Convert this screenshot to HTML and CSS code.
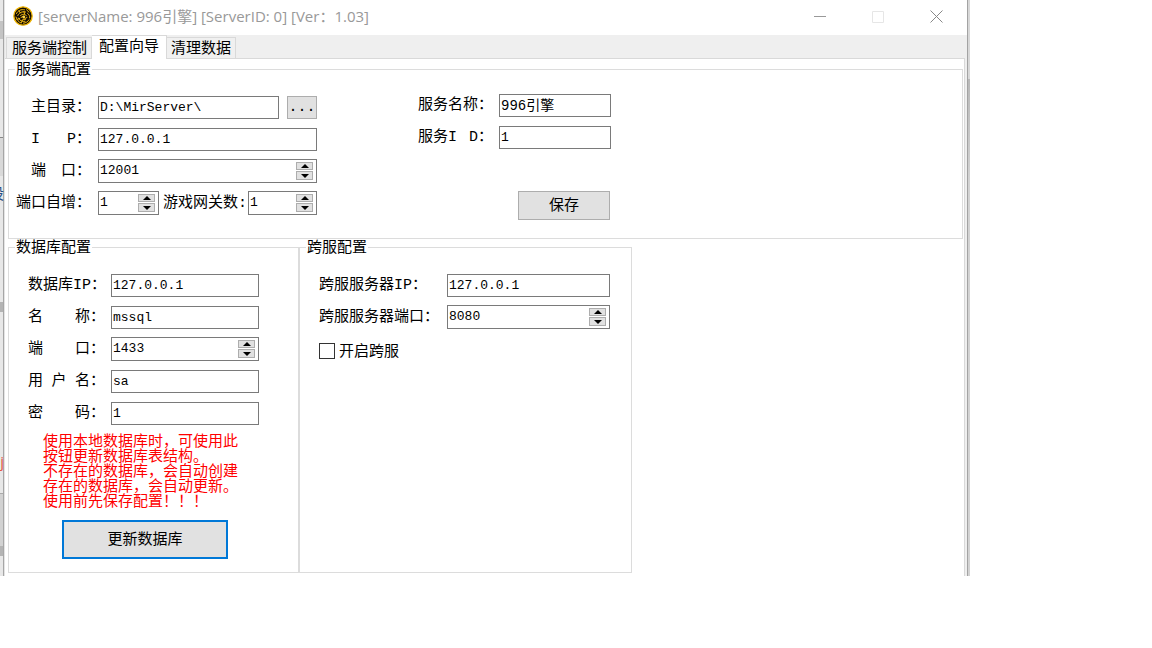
FILE: index.html
```html
<!DOCTYPE html>
<html lang="zh-CN">
<head>
<meta charset="utf-8">
<title>996引擎</title>
<link rel="stylesheet" href="styles.css">
</head>
<body>
<div class="desktop">
  <div class="behind" aria-hidden="true">
    <i class="mark mark-top"></i><i class="mark mark-pane"></i>
    <span class="clipped clipped-blue">设</span>
    <i class="mark mark-mid"></i>
    <i class="mark mark-low"></i>
    <span class="clipped clipped-red">j</span>
  </div>
  <main class="window">
    <header class="titlebar">
      <svg class="logo" viewBox="0 0 20 20" aria-hidden="true">
        <circle cx="10" cy="10" r="9.2" fill="#120c04" stroke="#f0b400" stroke-width="1.3"/>
        <g fill="none" stroke="#f5bb10" stroke-width="1" stroke-linecap="round">
          <path d="M3.500 7.500C5 4.500 8 3 11.500 3.800M4.800 9.500C6 6.500 9 5.200 12.500 6M13.500 3.800L16 6.200M14.500 7.300C16 8.500 17 10 16.700 12"/>
          <path d="M3 11C4 14 5.500 16 8 17M5.500 12C6.500 14.500 9 15.800 12 15.300M10.500 17.200C13 17 15 15.500 16 13.800"/>
          <path d="M7.500 9.500C9 7.800 12 8 13.500 9.700M8 11.500L10 10.500M12 12.500L14 11.500M10 13.300H12.500M6 5L7.500 7M11 5.500L11.500 8M4 13.500L6.500 12.500M8.500 16.500L9.500 14"/>
        </g>
        <circle cx="10.800" cy="11" r="1.400" fill="#ffd84a"/>
      </svg>
      <h1 class="title">[serverName: 996引擎] [ServerID: 0] [Ver：1.03]</h1>
      <div class="window-buttons">
        <button type="button" aria-label="最小化"><svg viewBox="0 0 13 13"><path d="M0 6.500H12" stroke="#999"/></svg></button>
        <button type="button" aria-label="最大化" disabled><svg viewBox="0 0 13 13"><path d="M.5 1.500H11.500V12.500H.5Z" stroke="#e6e6e6"/></svg></button>
        <button type="button" aria-label="关闭"><svg viewBox="0 0 13 13"><path d="M.5 .5L12.500 12.500M12.500 .5L.5 12.500" stroke="#888"/></svg></button>
      </div>
    </header>
    <nav class="tabs" role="tablist">
      <button class="tab" type="button" role="tab">服务端控制</button>
      <button class="tab tab-active" type="button" role="tab" aria-selected="true">配置向导</button>
      <button class="tab" type="button" role="tab">清理数据</button>
    </nav>
    <div class="pane">
      <fieldset class="group group-server">
        <legend>服务端配置</legend>
        <div class="server-columns">
          <div class="rows server-main">
            <div class="row">
              <label class="name" for="dir">主目录：</label>
              <div class="field"><input class="box grow" id="dir" value="D:\MirServer\"><button class="button browse" type="button">...</button></div>
            </div>
            <div class="row">
              <label class="name" for="ip"><span>I</span><span>P：</span></label>
              <div class="field"><input class="box grow" id="ip" value="127.0.0.1"></div>
            </div>
            <div class="row">
              <label class="name" for="port"><span>端</span><span>口：</span></label>
              <div class="field"><div class="box spin grow"><input id="port" value="12001"><span class="arrows"><button type="button" aria-label="增加"></button><button class="down" type="button" aria-label="减少"></button></span></div></div>
            </div>
            <div class="row">
              <label class="name name-wide" for="step">端口自增：</label>
              <div class="field field-pair"><div class="box spin spin-step"><input id="step" value="1"><span class="arrows"><button type="button" aria-label="增加"></button><button class="down" type="button" aria-label="减少"></button></span></div><label class="gates" for="gates">游戏网关数:</label><div class="box spin grow"><input id="gates" value="1"><span class="arrows"><button type="button" aria-label="增加"></button><button class="down" type="button" aria-label="减少"></button></span></div></div>
            </div>
          </div>
          <div class="rows server-side">
            <div class="row"><label class="name" for="sname">服务名称：</label><input class="box box-mixed" id="sname" value="996引擎"></div>
            <div class="row"><label class="name" for="sid"><span>服务I</span><span>D：</span></label><input class="box" id="sid" value="1"></div>
            <button class="button save" type="button">保存</button>
          </div>
        </div>
      </fieldset>
      <div class="lower">
        <fieldset class="group group-db">
          <legend>数据库配置</legend>
          <div class="rows">
            <div class="row"><label class="name" for="dbip">数据库IP：</label><input class="box" id="dbip" value="127.0.0.1"></div>
            <div class="row"><label class="name" for="dbname"><span>名</span><span>称：</span></label><input class="box" id="dbname" value="mssql"></div>
            <div class="row"><label class="name" for="dbport"><span>端</span><span>口：</span></label><div class="box spin"><input id="dbport" value="1433"><span class="arrows"><button type="button" aria-label="增加"></button><button class="down" type="button" aria-label="减少"></button></span></div></div>
            <div class="row"><label class="name" for="dbuser"><span>用</span><span>户</span><span>名：</span></label><input class="box" id="dbuser" value="sa"></div>
            <div class="row"><label class="name" for="dbpass"><span>密</span><span>码：</span></label><input class="box" id="dbpass" value="1"></div>
          </div>
          <p class="notice">使用本地数据库时，可使用此<br>按钮更新数据库表结构。<br>不存在的数据库，会自动创建<br>存在的数据库，会自动更新。<br>使用前先保存配置！！！</p>
          <button class="button update" type="button">更新数据库</button>
        </fieldset>
        <fieldset class="group group-cross">
          <legend>跨服配置</legend>
          <div class="rows">
            <div class="row"><label class="name" for="cip">跨服服务器IP：</label><input class="box" id="cip" value="127.0.0.1"></div>
            <div class="row"><label class="name" for="cport">跨服服务器端口：</label><div class="box spin"><input id="cport" value="8080"><span class="arrows"><button type="button" aria-label="增加"></button><button class="down" type="button" aria-label="减少"></button></span></div></div>
            <div class="check"><input type="checkbox" id="cross"><label for="cross">开启跨服</label></div>
          </div>
        </fieldset>
      </div>
    </div>
  </main>
  <div class="edge" aria-hidden="true"></div>
</div>
</body>
</html>
```
FILE: styles.css
```css
* { box-sizing: border-box; }

body {
  margin: 0;
  background: #fff;
  color: #000;
  font: 15px/16px "Liberation Mono", "Noto Sans CJK SC", monospace;
}

button, input { font: inherit; color: inherit; }

.desktop { display: flex; max-width: 970px; }

/* Strip of the windows behind this one */
.behind {
  position: relative;
  flex: 0 0 5px;
  overflow: hidden;
  border-right: 1px solid #e4e4e4;
  background: linear-gradient(90deg, #e8e8e8 3px, #a6a6a6 3px);
}
.mark { position: absolute; left: 0; width: 3px; }
.mark-top { top: 21px; height: 18px; background: #c4c4c4; }
.mark-pane { top: 137px; height: 39px; background: #d9d9d9; border-top: 1px solid #888; }
.mark-mid { top: 302px; height: 10px; background: #b4b4b4; }
.mark-low { top: 493px; height: 63px; background: #d2d2d2; border-top: 1px solid #aaa; border-bottom: 10px solid #b4b4b4; }
.clipped { position: absolute; right: 0; }
.clipped-blue { top: 188px; color: #264f85; }
.clipped-red { top: 453px; color: #e4573d; font-family: "Open Sans", sans-serif; }

.window {
  flex: 1;
  min-width: 0;
  background: #efefef;
  border-right: 1px solid #a3a3a3;
}
.edge { flex: 0 0 2px; background: linear-gradient(#d8d8d8 79px, #b8b8b8 79px, #d2d2d2 180px); }

.titlebar { display: flex; align-items: center; height: 35px; padding: 0 24px 3px 8px; background: #fff; }
.logo { width: 20px; height: 20px; margin-right: 5px; }
.title {
  flex: 1;
  margin: 0;
  color: #999;
  font: 400 15px/20px "Open Sans", "Noto Sans CJK SC", sans-serif;
  white-space: nowrap;
}
.window-buttons { display: flex; gap: 45px; }
.window-buttons button { display: flex; padding: 0; border: 0; background: none; }
.window-buttons svg { width: 13px; height: 13px; fill: none; }

.tabs { display: flex; align-items: flex-end; height: 23px; padding-left: 1px; }
.tab { height: 21px; padding: 4px 4px 0; border: 1px solid #d9d9d9; border-bottom: 0; background: #f0f0f0; white-space: nowrap; }
.tab:first-child { padding-left: 5px; }
.tab + .tab { border-left: 0; }
.tab.tab-active { position: relative; height: 24px; margin-bottom: -1px; padding: 0 7px; background: #fff; }

.pane { margin-right: 2px; padding: 2px 1px 3px 3px; border: solid #d9d9d9; border-width: 1px 1px 0 0; background: #fff; }

.group { min-width: 0; margin: 0; padding: 0 6px; border: 1px solid #dcdcdc; }
.group legend { padding: 4px 1px 0; line-height: 12px; }

.rows { display: flex; flex-direction: column; gap: 8px; }
.row { display: flex; align-items: center; height: 24px; }
.name { display: flex; flex: none; justify-content: space-between; padding-top: 2px; white-space: pre; }

.box { min-width: 0; height: 23px; padding: 0 1px; border: 1px solid #7a7a7a; border-radius: 0; background: #fff; font-size: 13px; outline: 0; }
.box-mixed { padding-bottom: 3px; font-size: 14px; }
.grow { flex: 1; }
.spin { display: flex; align-items: center; height: 24px; padding-right: 3px; }
.spin input { flex: 1; width: 0; min-width: 0; padding: 0; border: 0; background: none; outline: 0; }
.arrows { display: flex; flex-direction: column; gap: 1px; width: 17px; }
.arrows button { display: flex; align-items: center; justify-content: center; height: 8px; padding: 0; border: 1px solid #adadad; background: #e1e1e1; }
.arrows button::before { content: ""; border: solid transparent; border-width: 0 4px 4px; border-bottom-color: #000; }
.arrows .down { height: 9px; }
.arrows .down::before { border-width: 4px 4px 0; border-top-color: #000; }

.button { padding: 2px 0 0; border: 1px solid #adadad; background: #e1e1e1; }

.group-server { padding-bottom: 18px; }
.server-columns { display: flex; align-items: flex-start; gap: 101px; padding-top: 18px; }
.server-main .name { width: 60px; margin: 0 7px 0 16px; }
.server-main .name-wide { width: 75px; margin-left: 1px; }
.field { display: flex; gap: 8px; width: 219px; }
.field-pair { gap: 0; }
.browse { width: 30px; height: 23px; }
.spin-step { width: 61px; }
.gates { width: 89px; padding: 2px 0 0 4px; line-height: 22px; white-space: nowrap; }
.server-side { margin-top: -2px; }
.server-side .name { width: 75px; margin-right: 6px; }
.server-side .box { width: 112px; }
.save { align-self: flex-end; width: 92px; height: 29px; margin: 34px 1px 0 0; }

.lower { display: flex; }
.group-db { width: 291px; padding-bottom: 13px; }
.group-db .rows, .group-cross .rows { padding-top: 18px; }
.group-db .name { width: 77px; margin: 0 6px 0 13px; }
.group-db .box { width: 148px; }
.notice { margin: 10px 0 10px 28px; color: #f00; line-height: 15px; white-space: nowrap; }
.update { display: block; width: 166px; height: 39px; margin-left: 47px; border: 2px solid #0078d7; }

.group-cross { width: 333px; }
.group-cross .name { width: 128px; margin-left: 13px; }
.group-cross .box { width: 163px; }
.check { display: flex; align-items: center; gap: 4px; margin: 4px 0 0 13px; }
.check label { padding-top: 4px; }
.check input { appearance: none; width: 16px; height: 16px; margin: 0; border: 1px solid #333; background: #fff; }
.check input:checked { background: #0078d7; }
```
